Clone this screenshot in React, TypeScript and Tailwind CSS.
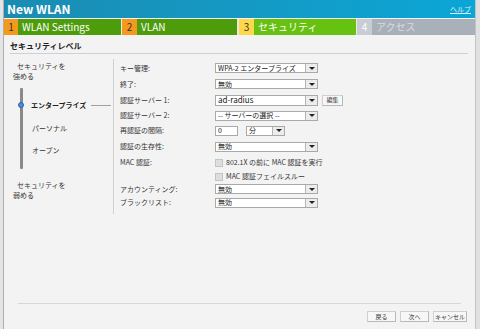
import React from "react";

const F = "font-['Tahoma','Noto_Sans_CJK_JP',sans-serif]";

function Select({ text, w = 103, big = false }: { text: string; w?: number; big?: boolean }) {
  return (
    <div
      className={`flex items-stretch bg-white border border-[#a9a9a9] ${big ? "h-[11px]" : "h-[10px]"}`}
      style={{ width: w }}
    >
      <div className={`flex-1 flex items-center pl-[2px] leading-none text-[#222] ${big ? "text-[8px]" : "text-[7px]"}`}>{text}</div>
      <div className="w-[12px] bg-[#ececec] border-l border-[#b5b5b5] flex items-center justify-center">
        <div className="w-0 h-0 border-l-[3px] border-r-[3px] border-t-[3px] border-l-transparent border-r-transparent border-t-[#222]" />
      </div>
    </div>
  );
}

function Row({ label, h, children }: { label: string; h: number; children: React.ReactNode }) {
  return (
    <div className="flex items-center" style={{ height: h }}>
      <div className="w-[95px] text-[7px] leading-none text-[#333]">{label}</div>
      {children}
    </div>
  );
}

function Check({ text }: { text: string }) {
  return (
    <div className="flex items-center gap-[3px]">
      <div className="w-[8px] h-[8px] bg-[#dedede] border border-[#c4c4c4]" />
      <span className="text-[7px] leading-none text-[#333]">{text}</span>
    </div>
  );
}

function Btn({ text, w }: { text: string; w: number }) {
  return (
    <div
      className="h-[11px] bg-[#f7f7f7] border border-[#d0d0d0] border-b-[#b8b8b8] border-r-[#b8b8b8] flex items-center justify-center text-[6px] leading-none text-[#333]"
      style={{ width: w }}
    >
      {text}
    </div>
  );
}

export default function App() {
  return (
    <div className={`w-[480px] h-[329px] flex overflow-hidden bg-[#dcdcdc] ${F}`}>
      <div className="w-[4px] bg-[#e4e4e4] border-r border-[#b0b0b0]" />
      <div className="w-[472px] flex flex-col bg-[#f3f3f3] border-r border-[#c2c2c2]">
        {/* title */}
        <div className="h-[18px] flex items-center justify-between px-[3px] bg-gradient-to-r from-[#1a8cb2] to-[#0aa6d6]">
          <span className="text-[12px] font-bold text-white leading-none">New WLAN</span>
          <span className="text-[7px] text-[#d8f2ff] underline leading-none mr-[1px]">ヘルプ</span>
        </div>
        {/* tabs */}
        <div className="h-[16px] mt-px flex bg-[#e8e8e8]">
          <div className="w-[14px] bg-[#f39a1e] text-[10px] text-[#333] flex items-center justify-center leading-none">1</div>
          <div className="w-[103px] bg-[#4d9c0c] text-[10px] text-white flex items-center pl-[4px] leading-none">WLAN Settings</div>
          <div className="w-[1px]" />
          <div className="w-[15px] bg-[#f39a1e] text-[10px] text-[#333] flex items-center justify-center leading-none">2</div>
          <div className="w-[100px] bg-[#4d9c0c] text-[10px] text-white flex items-center pl-[4px] leading-none">VLAN</div>
          <div className="w-[2px]" />
          <div className="w-[15px] bg-[#ffd84a] text-[10px] text-[#333] flex items-center justify-center leading-none">3</div>
          <div className="w-[102px] bg-[#66c111] text-[10px] text-white flex items-center pl-[4px] leading-none">セキュリティ</div>
          <div className="w-[1px]" />
          <div className="w-[15px] bg-[#c8cdd3] text-[10px] text-white flex items-center justify-center leading-none">4</div>
          <div className="flex-1 bg-[#a8b0ba] text-[10px] text-[#d8dce1] flex items-center pl-[4px] leading-none">アクセス</div>
        </div>
        {/* content */}
        <div className="flex-1 flex flex-col px-[6px]">
          <div className="h-[18px] mt-[1px] flex items-end pb-[3px] border-b border-[#c9d1dc] mr-[1px]">
            <span className="text-[8px] font-bold text-[#222] leading-none">セキュリティレベル</span>
          </div>
          <div className="flex mt-[5px]">
            {/* left panel */}
            <div className="w-[104px] h-[155px] border-r border-[#cfcfcf] flex flex-col">
              <div className="text-[7px] leading-[10px] text-[#333] pl-[3px] mt-[2px]">
                <div className="pl-[4px]">セキュリティを</div>
                <div>強める</div>
              </div>
              <div className="flex mt-[7px] ml-[10px]">
                <div className="relative w-[3px] h-[81px] bg-[#8a8a8a] rounded-[1px]">
                  <div className="absolute left-[-2px] top-[14px] w-[6px] h-[6px] rounded-full bg-[#4a8de0] border border-[#2a62b0]" />
                </div>
                <div className="flex flex-col ml-[8px] text-[7px] leading-none text-[#333]">
                  <div className="flex items-center mt-[14px]">
                    <span className="font-bold text-[#222]">エンタープライズ</span>
                    <div className="w-[20px] h-px bg-[#a0a0a0] ml-[5px]" />
                  </div>
                  <div className="mt-[16px] pl-[1px]">パーソナル</div>
                  <div className="mt-[15px] pl-[1px]">オープン</div>
                </div>
              </div>
              <div className="text-[7px] leading-[10px] text-[#333] pl-[3px] mt-[11px]">
                <div className="pl-[4px]">セキュリティを</div>
                <div>弱める</div>
              </div>
            </div>
            {/* form */}
            <div className="flex flex-col pl-[6px] pt-[1px]">
              <Row label="キー管理:" h={16}><Select text="WPA-2 エンタープライズ" /></Row>
              <Row label="終了:" h={16}><Select text="無効" /></Row>
              <Row label="認証サーバー 1:" h={16}>
                <Select text="ad-radius" big />
                <div className="ml-[4px]"><Btn text="編集" w={21} /></div>
              </Row>
              <Row label="認証サーバー 2:" h={15}><Select text="-- サーバーの選択 --" /></Row>
              <Row label="再認証の間隔:" h={15}>
                <div className="w-[23px] h-[10px] bg-white border border-[#a9a9a9] text-[7px] leading-none flex items-center pl-[2px]">0</div>
                <div className="ml-[8px]"><Select text="分" w={39} /></div>
              </Row>
              <Row label="認証の生存性:" h={17}><Select text="無効" /></Row>
              <Row label="MAC 認証:" h={15}><Check text="802.1X の前に MAC 認証を実行" /></Row>
              <Row label="" h={13}><Check text="MAC 認証フェイルスルー" /></Row>
              <Row label="アカウンティング:" h={12}><Select text="無効" /></Row>
              <Row label="ブラックリスト:" h={15}><Select text="無効" /></Row>
            </div>
          </div>
          <div className="flex-1" />
          <div className="mx-[8px] h-px bg-[#d2d8e0]" />
          <div className="flex justify-end gap-[4px] mt-[7px] mb-[7px] mr-[2px]">
            <Btn text="戻る" w={29} />
            <Btn text="次へ" w={29} />
            <Btn text="キャンセル" w={34} />
          </div>
        </div>
      </div>
      <div className="flex-1 bg-[#e0e0e0]" />
    </div>
  );
}
